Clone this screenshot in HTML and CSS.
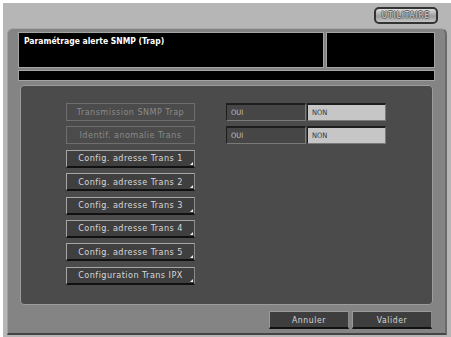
FILE: index.html
```html
<!DOCTYPE html>
<html lang="fr">
<head>
  <meta charset="UTF-8" />
  <title>Paramétrage alerte SNMP (Trap)</title>
  <link rel="stylesheet" href="styles.css">
</head>
<body>
  <div class="screen">
    <div class="topbar">
      <button class="util-btn">UTILITAIRE</button>
    </div>

    <div class="panel">
      <div class="header">
        <div class="title-box">Paramétrage alerte SNMP (Trap)</div>
        <div class="side-box"></div>
      </div>
      <div class="msg-strip"></div>

      <div class="content">
        <div class="row">
          <button class="key disabled">Transmission SNMP Trap</button>
          <div class="choice">
            <span class="opt">OUI</span>
            <span class="opt on">NON</span>
          </div>
        </div>
        <div class="row">
          <button class="key disabled">Identif. anomalie Trans</button>
          <div class="choice">
            <span class="opt">OUI</span>
            <span class="opt on">NON</span>
          </div>
        </div>
        <div class="row"><button class="key">Config. adresse Trans 1</button></div>
        <div class="row"><button class="key">Config. adresse Trans 2</button></div>
        <div class="row"><button class="key">Config. adresse Trans 3</button></div>
        <div class="row"><button class="key">Config. adresse Trans 4</button></div>
        <div class="row"><button class="key">Config. adresse Trans 5</button></div>
        <div class="row"><button class="key">Configuration Trans IPX</button></div>
      </div>

      <div class="actions">
        <button class="act">Annuler</button>
        <button class="act">Valider</button>
      </div>
    </div>
  </div>
</body>
</html>
```

FILE: styles.css
```css
body {
  margin: 0;
  background: #fff;
  font-family: "DejaVu Sans Condensed", "DejaVu Sans", sans-serif;
}

.screen {
  margin: 3px 0 0 3px;
  width: 448px;
  height: 334px;
  background: #b6b6b6;
}

.topbar {
  height: 25px;
  display: flex;
  justify-content: flex-end;
  align-items: flex-start;
  padding: 4px 13px 0 0;
  box-sizing: border-box;
}

.util-btn {
  width: 64px;
  height: 17px;
  border: 2px solid #333;
  border-radius: 5px;
  background: linear-gradient(#dcdcdc, #9c9c9c 55%, #c4c4c4);
  color: #d4d4d4;
  font-family: inherit;
  font-size: 8px;
  letter-spacing: 1px;
  text-shadow: 1px 0 #5e5e5e, -1px 0 #5e5e5e, 0 1px #5e5e5e, 0 -1px #5e5e5e;
  padding: 0;
}

.panel {
  margin-left: 4px;
  width: 440px;
  height: 307px;
  box-sizing: border-box;
  background: #848484;
  border-top: 1px solid #a8a8a8;
  border-left: 1px solid #a0a0a0;
  border-right: 2px solid #6a6a6a;
  border-bottom: 2px solid #444;
  border-radius: 6px 6px 0 0;
  padding: 3px 10px 0 10px;
}

.header {
  display: flex;
  gap: 2px;
  height: 36px;
}

.title-box,
.side-box,
.msg-strip {
  background: #000;
  border: 1px solid #a4a4a4;
  box-sizing: border-box;
}

.title-box {
  width: 306px;
  color: #fff;
  font-size: 8.5px;
  font-weight: bold;
  padding: 3px 5px;
}

.side-box {
  flex: 1;
}

.msg-strip {
  height: 11px;
  margin-top: 2px;
}

.content {
  margin: 4px 2px 0 2px;
  height: 220px;
  box-sizing: border-box;
  background: #4b4b4b;
  border: 1px solid #9c9c9c;
  border-radius: 4px;
  padding: 17px 0 0 45px;
  display: flex;
  flex-direction: column;
  gap: 5.4px;
}

.row {
  display: flex;
  gap: 31px;
  height: 18px;
}

.key {
  position: relative;
  width: 129px;
  height: 18px;
  padding: 0;
  background: #3f3f3f;
  color: #d8d8d8;
  font-family: inherit;
  font-size: 9px;
  letter-spacing: 0.45px;
  border: 1px solid;
  border-color: #a6a6a6 #8a8a8a #111 #a6a6a6;
  border-bottom-width: 2px;
}

.key::after {
  content: "";
  position: absolute;
  right: 1px;
  bottom: 1px;
  border-left: 3px solid transparent;
  border-bottom: 3px solid #f0f0f0;
}

.key.disabled {
  background: #4b4b4b;
  color: #8a8a8a;
  border: 1px solid #6e6e6e;
}

.key.disabled::after {
  display: none;
}

.choice {
  display: flex;
  gap: 1px;
}

.opt {
  width: 80px;
  height: 18px;
  box-sizing: border-box;
  background: #464646;
  color: #c0c0c0;
  font-size: 7.5px;
  line-height: 15px;
  padding-left: 4px;
  border: 1px solid;
  border-color: #1e1e1e #7a7a7a #7a7a7a #1e1e1e;
  border-top-width: 2px;
}

.opt.on {
  width: 79px;
  background: #c6c6c6;
  color: #3a3a3a;
}

.actions {
  display: flex;
  justify-content: flex-end;
  gap: 3px;
  padding: 6px 3px 0 0;
}

.act {
  width: 80px;
  height: 18px;
  padding: 0;
  background: #3e3e3e;
  color: #d6d6d6;
  font-family: inherit;
  font-size: 8.5px;
  letter-spacing: 0.6px;
  border: 1px solid;
  border-color: #9a9a9a #8a8a8a #111 #9a9a9a;
  border-bottom-width: 2px;
}
```
